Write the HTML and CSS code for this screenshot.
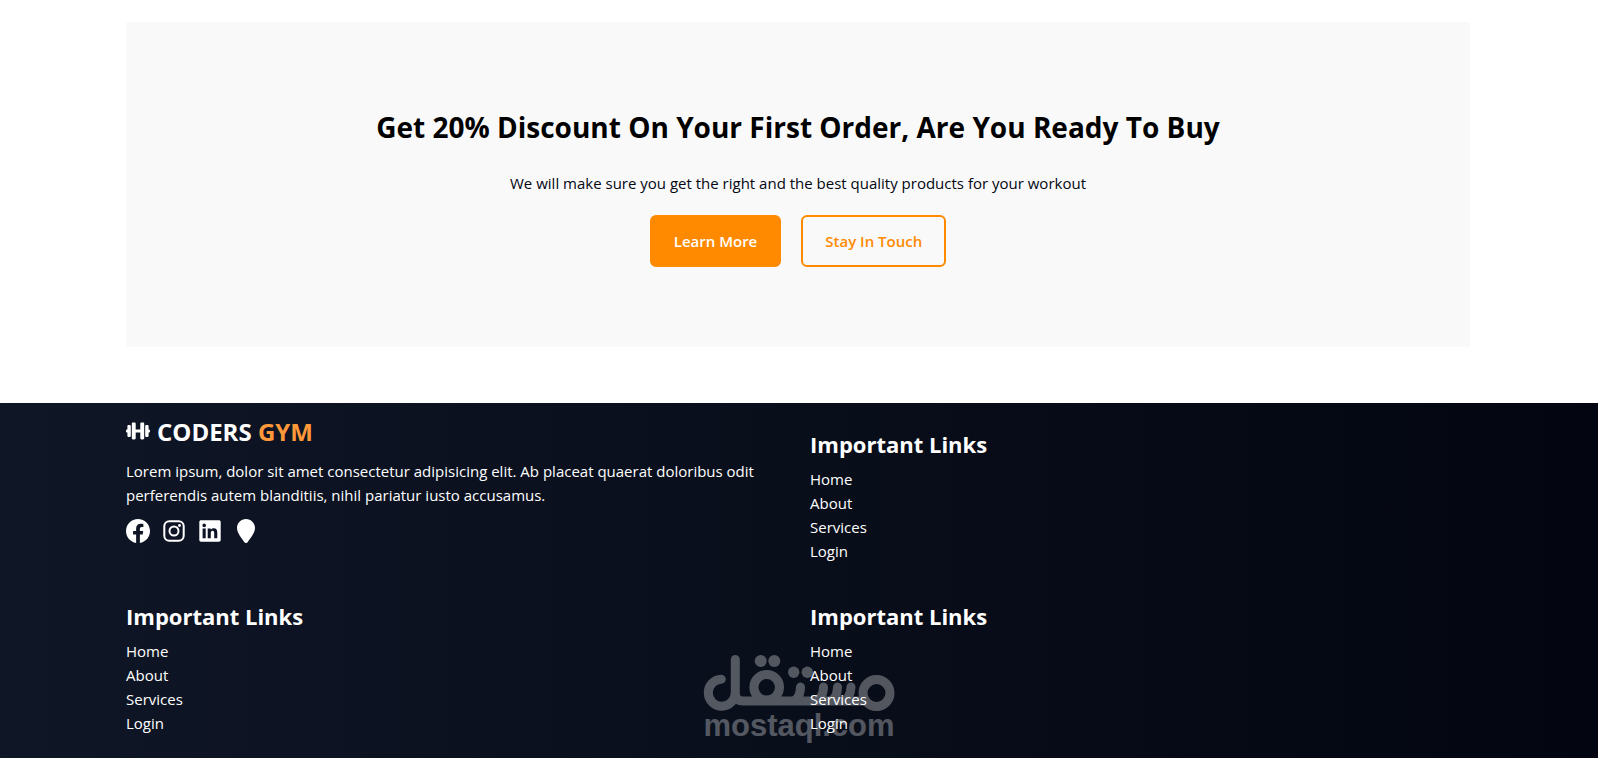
FILE: index.html
```html
<!DOCTYPE html>
<html lang="en">
<head>
<meta charset="utf-8">
<meta name="viewport" content="width=device-width, initial-scale=1">
<title>Coders Gym</title>
<link rel="stylesheet" href="styles.css">
</head>
<body>
<main class="page">
  <section class="cta">
    <h2 class="cta-title">Get 20% Discount On Your First Order, Are You Ready To Buy</h2>
    <p class="cta-text">We will make sure you get the right and the best quality products for your workout</p>
    <div class="cta-actions">
      <button class="btn btn-solid" type="button">Learn More</button>
      <button class="btn btn-outline" type="button">Stay In Touch</button>
    </div>
  </section>
</main>
<footer class="footer">
  <div class="watermark">
    <svg viewBox="0 0 192 57" role="img" aria-label="مستقل"><g fill="none" stroke="currentColor" stroke-width="9"><path stroke-linecap="round" stroke-linejoin="round" d="M18.300 25.200A13.500 13.500 0 1 0 32.300 38.700V5.500M32.300 38.700Q32.300 47 40 47H160M90 47Q97 45 97.500 33M112 47Q120 45 120.500 33M127 47Q134 45 134.500 33M140 47Q147 45 148 33"/><circle cx="63.700" cy="33.300" r="12.800"/><circle cx="173.500" cy="39" r="13.500"/></g><g fill="currentColor"><circle cx="57.700" cy="7" r="6"/><circle cx="71.300" cy="7" r="6"/><circle cx="90.700" cy="18.300" r="5.700"/><circle cx="104.300" cy="18.300" r="5.700"/></g></svg>
    <span>mostaql.com</span>
  </div>
  <div class="footer-grid">
    <section class="brand">
      <a class="logo" href="#">
        <svg class="icon" viewBox="0 1 24 24" aria-hidden="true"><path fill="currentColor" d="M7 3.500h1.500c.7 0 1.200.5 1.200 1.200V10.600h4.600V4.700c0-.7.500-1.200 1.200-1.200H17c.7 0 1.200.5 1.200 1.200v14.600c0 .7-.5 1.200-1.200 1.200h-1.500c-.7 0-1.200-.5-1.200-1.200V13.400H9.700v5.900c0 .7-.5 1.200-1.200 1.200H7c-.7 0-1.200-.5-1.200-1.200V4.700c0-.7.500-1.200 1.200-1.200zM2.700 6h.8c.8 0 1.300.5 1.300 1.300v9.400c0 .8-.5 1.300-1.300 1.300h-.8c-.8 0-1.300-.5-1.300-1.300V13.500H1a1 1 0 0 1-1-1v-1a1 1 0 0 1 1-1h.4V7.300C1.400 6.500 1.900 6 2.700 6zM21.300 6h-.8c-.8 0-1.300.5-1.300 1.300v9.400c0 .8.5 1.300 1.300 1.300h.8c.8 0 1.300-.5 1.300-1.300V13.500h.4a1 1 0 0 0 1-1v-1a1 1 0 0 0-1-1h-.4V7.300c0-.8-.5-1.300-1.300-1.300z"/></svg>
        <span>CODERS <span class="accent">GYM</span></span>
      </a>
      <p class="about">Lorem ipsum, dolor sit amet consectetur adipisicing elit. Ab placeat quaerat doloribus odit perferendis autem blanditiis, nihil pariatur iusto accusamus.</p>
      <div class="social">
        <a href="#" aria-label="Facebook"><svg class="icon" viewBox="0 0 24 24"><path fill="currentColor" d="M24 12.070C24 5.410 18.630 0 12 0S0 5.410 0 12.070c0 6.030 4.390 11.020 10.130 11.930v-8.440H7.080v-3.490h3.050V9.410c0-3.020 1.790-4.690 4.530-4.690 1.310 0 2.690.24 2.690.24v2.970h-1.510c-1.500 0-1.960.93-1.960 1.890v2.260h3.330l-.53 3.490h-2.800V24C19.610 23.090 24 18.100 24 12.070z"/></svg></a>
        <a href="#" aria-label="Instagram"><svg class="icon" viewBox="0 0 24 24"><rect x="2.300" y="2.300" width="19.400" height="19.400" rx="5" fill="none" stroke="currentColor" stroke-width="2"/><circle cx="12" cy="12" r="4.500" fill="none" stroke="currentColor" stroke-width="2"/><circle cx="17.500" cy="6.500" r="1.400" fill="currentColor"/></svg></a>
        <a href="#" aria-label="LinkedIn"><svg class="icon" viewBox="0 0 24 24"><path fill="currentColor" fill-rule="evenodd" d="M3 1.300h18c.9 0 1.700.7 1.700 1.600v18.200c0 .9-.8 1.600-1.700 1.600H3c-.9 0-1.700-.7-1.700-1.600V2.900c0-.9.800-1.600 1.700-1.600zM4.600 9.500v9.800h3.100V9.500H4.600zM6.200 4.600a1.800 1.800 0 1 0 0 3.600 1.800 1.800 0 0 0 0-3.600zM9.700 9.500v9.800h3.100v-5.200c0-1.300.5-2.300 1.800-2.300s1.600 1.100 1.600 2.300v5.200h3.100v-5.900c0-2.700-1.100-4.200-3.500-4.200-1.500 0-2.500.7-3 1.600V9.500H9.700z"/></svg></a>
        <a href="#" aria-label="Location"><svg class="icon" viewBox="0 0 24 24"><path fill="currentColor" d="M12 0c5 0 9 4 9 9 0 5.500-5.500 11-7.400 14.200-.8 1.100-2.400 1.100-3.200 0C8.500 20 3 14.500 3 9c0-5 4-9 9-9z"/></svg></a>
      </div>
    </section>
    <nav class="links">
      <h3>Important Links</h3>
      <ul><li><a href="#">Home</a></li><li><a href="#">About</a></li><li><a href="#">Services</a></li><li><a href="#">Login</a></li></ul>
    </nav>
    <nav class="links">
      <h3>Important Links</h3>
      <ul><li><a href="#">Home</a></li><li><a href="#">About</a></li><li><a href="#">Services</a></li><li><a href="#">Login</a></li></ul>
    </nav>
    <nav class="links">
      <h3>Important Links</h3>
      <ul><li><a href="#">Home</a></li><li><a href="#">About</a></li><li><a href="#">Services</a></li><li><a href="#">Login</a></li></ul>
    </nav>
  </div>
</footer>
</body>
</html>
```
FILE: styles.css
```css
* { box-sizing: border-box; margin: 0; padding: 0; }
body { font-family: "Segoe UI", "Open Sans", "Noto Sans", sans-serif; font-size: 15px; line-height: 24px; color: #000; background: #fff; }
a { color: inherit; text-decoration: none; }
ul { list-style: none; }
.page { padding: 22px 128px 56px 126px; }
.cta { display: flex; flex-direction: column; align-items: center; padding: 80px 24px; background: #f9f9f9; border-radius: 2px; text-align: center; }
.cta-title { font-size: 28px; line-height: 50px; font-weight: 700; margin-bottom: 19px; }
.cta-text { margin-bottom: 20px; color: #030712; }
.cta-actions { display: flex; gap: 20px; }
.btn { font: inherit; font-weight: 600; padding: 12px 22px; border: 2px solid #ff8a00; border-radius: 6px; cursor: pointer; }
.btn-solid { background: #ff8a00; color: #fff; }
.btn-outline { background: transparent; color: #ff8a00; }
.footer { position: relative; isolation: isolate; color: #fff; padding: 12px 128px 23px 126px; background: linear-gradient(to right, #0f1626, #030610); }
.footer-grid { display: grid; grid-template-columns: 1fr 1fr; column-gap: 24px; row-gap: 24px; }
.icon { display: block; width: 24px; height: 24px; }
.logo { display: flex; align-items: center; gap: 7px; font-size: 24px; line-height: 34px; font-weight: 700; margin-bottom: 10px; }
.accent { color: #ff9838; }
.social { display: flex; gap: 12px; margin-top: 12px; }
.links { padding-top: 12px; }
.links h3 { font-size: 22px; line-height: 34px; margin-bottom: 6px; }
.watermark { position: absolute; z-index: -1; left: 50%; bottom: 17px; transform: translateX(-50%); width: 192px; color: #fff; opacity: 0.3; font: 700 31px/30px "Liberation Sans", sans-serif; text-align: center; }
.watermark svg { display: block; width: 100%; }
```
